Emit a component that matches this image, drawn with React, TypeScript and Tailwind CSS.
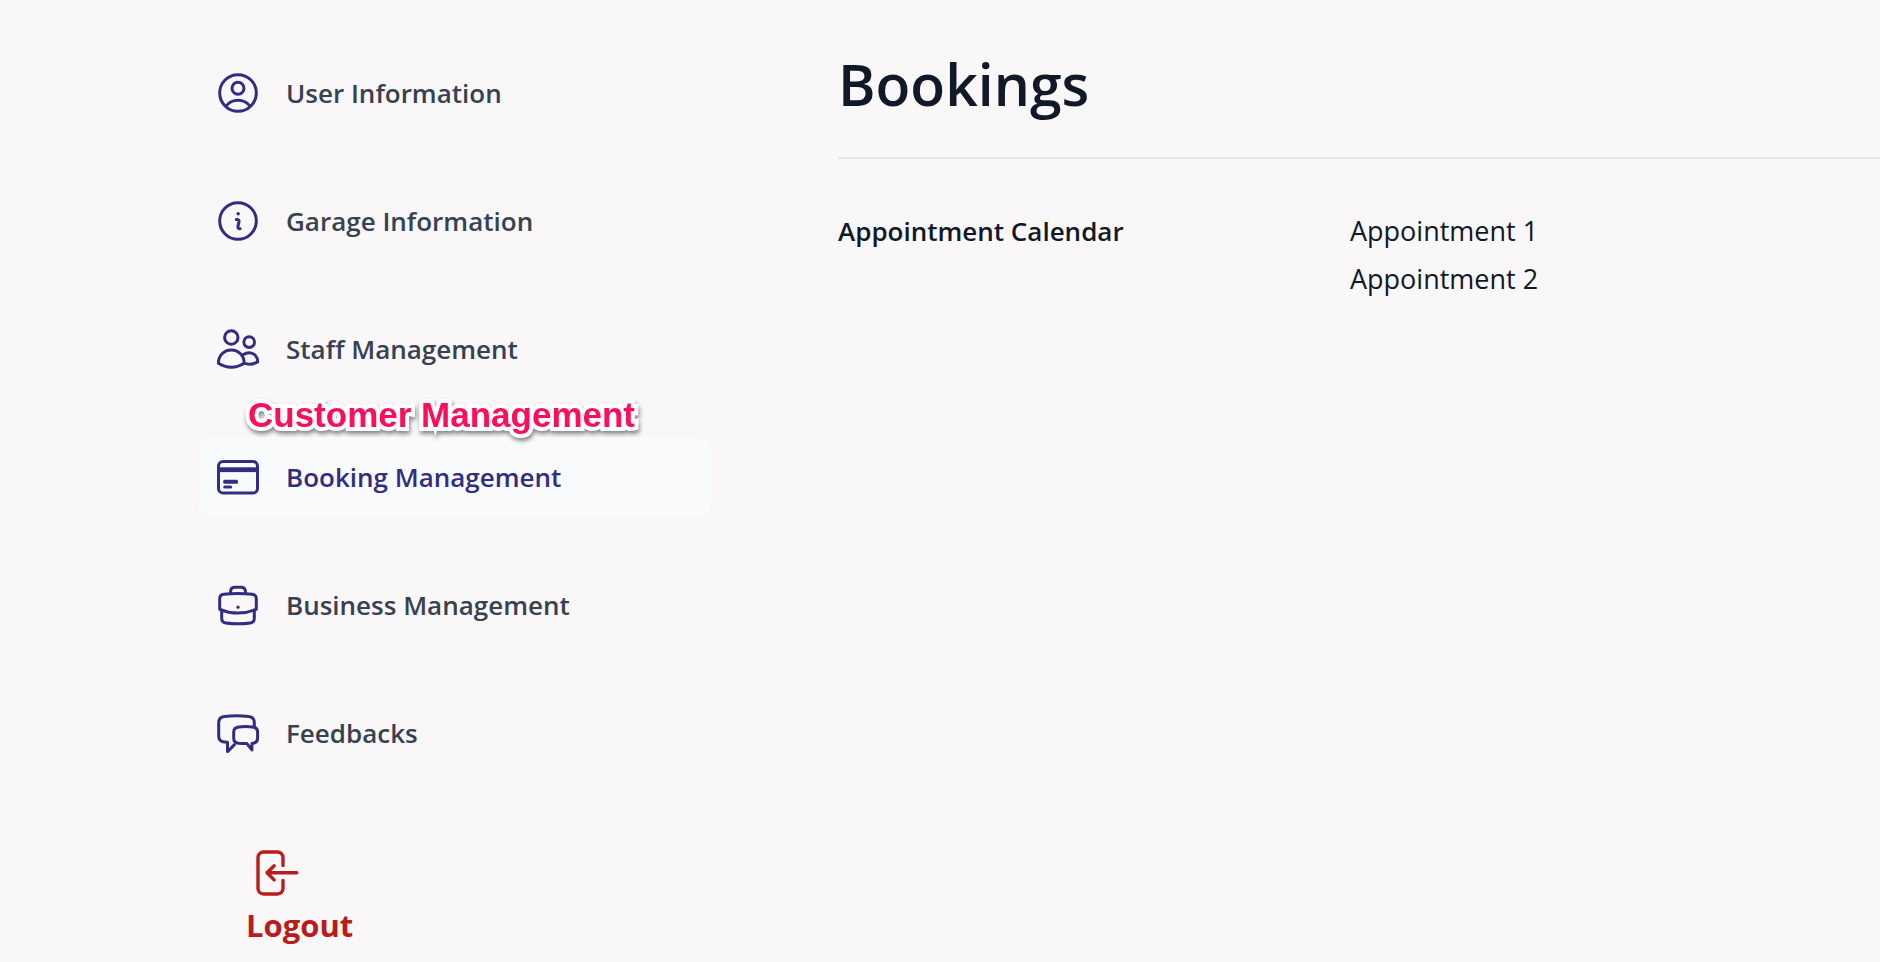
import type { ReactNode } from "react";

function Icon({ children }: { children: ReactNode }) {
  return (
    <svg
      viewBox="0 0 48 48"
      className="size-12 shrink-0"
      fill="none"
      stroke="currentColor"
      strokeWidth="3"
      strokeLinecap="round"
      strokeLinejoin="round"
      aria-hidden="true"
    >
      {children}
    </svg>
  );
}

const UserIcon = () => (
  <Icon>
    <circle cx="24" cy="24" r="18.3" />
    <circle cx="24" cy="19.3" r="6" />
    <path d="M12 37.2c2.8-3.8 7.2-5.9 12-5.9s9.2 2.1 12 5.9" />
  </Icon>
);

const InfoIcon = () => (
  <Icon>
    <circle cx="24" cy="24" r="18.3" />
    <circle cx="24.2" cy="16.7" r="1.7" fill="currentColor" stroke="none" />
    <path d="M22.3 22.6h.8c1.5 0 2.2.9 1.9 2.3l-1 4.2c-.4 1.7.3 2.8 2.1 2.6" />
  </Icon>
);

const StaffIcon = () => (
  <Icon>
    <circle cx="17.3" cy="12.5" r="6.7" />
    <circle cx="35.2" cy="17.1" r="5.3" />
    <path d="M4.4 38.3C4.4 30.8 9.9 24.9 17.3 24.9s12.9 5.9 12.9 13.4c-3.9 2.6-8.3 3.9-12.9 3.9s-9-1.3-12.9-3.9Z" />
    <path d="M29.4 29.6c1.7-1.2 3.7-1.9 5.8-1.9 4.8 0 8.5 3.9 8.5 9.2-3.7 2.2-9 2.7-13.5 1.5" />
  </Icon>
);

const CardIcon = () => (
  <Icon>
    <rect x="4.5" y="8.5" width="39" height="31.5" rx="4.6" />
    <rect x="4.5" y="14.3" width="39" height="4.8" fill="currentColor" stroke="none" />
    <rect x="9.2" y="26.8" width="14.8" height="4" rx="1.5" fill="currentColor" stroke="none" />
    <rect x="9.2" y="32.4" width="8.9" height="3.2" rx="1.5" fill="currentColor" stroke="none" />
  </Icon>
);

const BriefcaseIcon = () => (
  <Icon>
    <path d="M16.5 12.3V11.3c0-3 1.5-4.8 4-5 2.3-.2 4.7-.2 7 0 2.5.2 4 2 4 5v1" />
    <path d="M5.7 28.3V17.8c0-2.6 1.5-4.2 4.1-4.5 9.4-1 19-1 28.4 0 2.6.3 4.1 1.9 4.1 4.5v10.5c-11.5 4.8-25.1 4.8-36.6 0Z" />
    <path d="M7.7 29.1v8.4c0 2.5 1.4 4.1 4 4.5 8.1 1.1 16.5 1.1 24.6 0 2.6-.4 4-2 4-4.5v-8.4" />
    <circle cx="24" cy="26.2" r="1.6" fill="currentColor" stroke="none" />
  </Icon>
);

const ChatIcon = () => (
  <Icon>
    <path d="M40.3 17.3V13.8c0-3.7-2-6-5.6-6.3-8-.9-16.3-.9-24.3 0C6.8 7.9 4.7 10.2 4.7 13.8v13.2c0 3.6 2 5.7 5.4 6l3.4.3v9.3l7-7" />
    <path d="M24.7 17.9c4.5-.6 9.5-.6 14 0 3.2.4 4.9 2 4.9 5v6.4c0 2.9-1.6 4.6-4.5 5l-1.2.2v6.4l-5-6.3c-3-.2-5.9-.2-8.6-.4-3-.3-4.6-2-4.6-4.9v-6.4c0-3 1.8-4.6 5-5Z" />
  </Icon>
);

const LogoutIcon = () => (
  <svg
    viewBox="0 0 48 48"
    className="ml-2 size-12"
    fill="none"
    stroke="currentColor"
    strokeWidth="3.4"
    strokeLinecap="round"
    strokeLinejoin="round"
    aria-hidden="true"
  >
    <path d="M29 16.5V8.5a5.5 5.5 0 0 0-5.5-5.5H9.5A5.5 5.5 0 0 0 4 8.5v31A5.5 5.5 0 0 0 9.5 45h14a5.5 5.5 0 0 0 5.5-5.5v-8" />
    <path d="M42.8 23.8H13.3M20.2 16.7l-7.2 7.1 7.2 7.1" />
  </svg>
);

const items = [
  { label: "User Information", icon: UserIcon },
  { label: "Garage Information", icon: InfoIcon },
  { label: "Staff Management", icon: StaffIcon },
  { label: "Booking Management", icon: CardIcon, active: true, note: "Customer Management" },
  { label: "Business Management", icon: BriefcaseIcon },
  { label: "Feedbacks", icon: ChatIcon },
];

export default function App() {
  return (
    <div className="flex min-h-screen bg-[#f9f7f8] pl-[198px] font-['Open_Sans','Noto_Sans',sans-serif]">
      <aside className="w-lg shrink-0 pt-[53px]">
        <nav>
          <ul className="flex flex-col gap-12">
            {items.map(({ label, icon: ItemIcon, active, note }) => (
              <li key={label} className="relative">
                <a
                  href="#"
                  aria-current={active ? "page" : undefined}
                  className={
                    active
                      ? "flex h-20 items-center gap-6 rounded-xl bg-[#f9fafc] px-4 text-[#312e81]"
                      : "flex h-20 items-center gap-6 rounded-xl px-4 text-[#374151]"
                  }
                >
                  <span className="text-[#312e81]">
                    <ItemIcon />
                  </span>
                  <span className="pt-px text-[26px] font-semibold">{label}</span>
                </a>
                {note && (
                  <span className="absolute -top-[42px] left-[50px] font-['Liberation_Sans',sans-serif] text-[35px] leading-10 font-bold whitespace-nowrap text-[#ff0f5b] drop-shadow-[1px_3px_2px_rgba(0,0,0,0.45)] [-webkit-text-stroke:8px_white] [paint-order:stroke_fill]">
                    {note}
                  </span>
                )}
              </li>
            ))}
          </ul>
        </nav>
        <button type="button" className="mt-[76px] ml-12 flex flex-col gap-2 text-[#b91c1c]">
          <LogoutIcon />
          <span className="text-[31px] leading-10 font-bold">Logout</span>
        </button>
      </aside>
      <main className="ml-32 flex-1 pt-12 text-[#111827]">
        <h1 className="border-b-2 border-[#e5e7eb] pb-9 text-[57px] leading-[73px] font-semibold">Bookings</h1>
        <div className="flex pt-12 text-[26px] leading-12">
          <h2 className="w-lg font-semibold">Appointment Calendar</h2>
          <ul className="text-[27px]">
            <li>Appointment 1</li>
            <li>Appointment 2</li>
          </ul>
        </div>
      </main>
    </div>
  );
}
